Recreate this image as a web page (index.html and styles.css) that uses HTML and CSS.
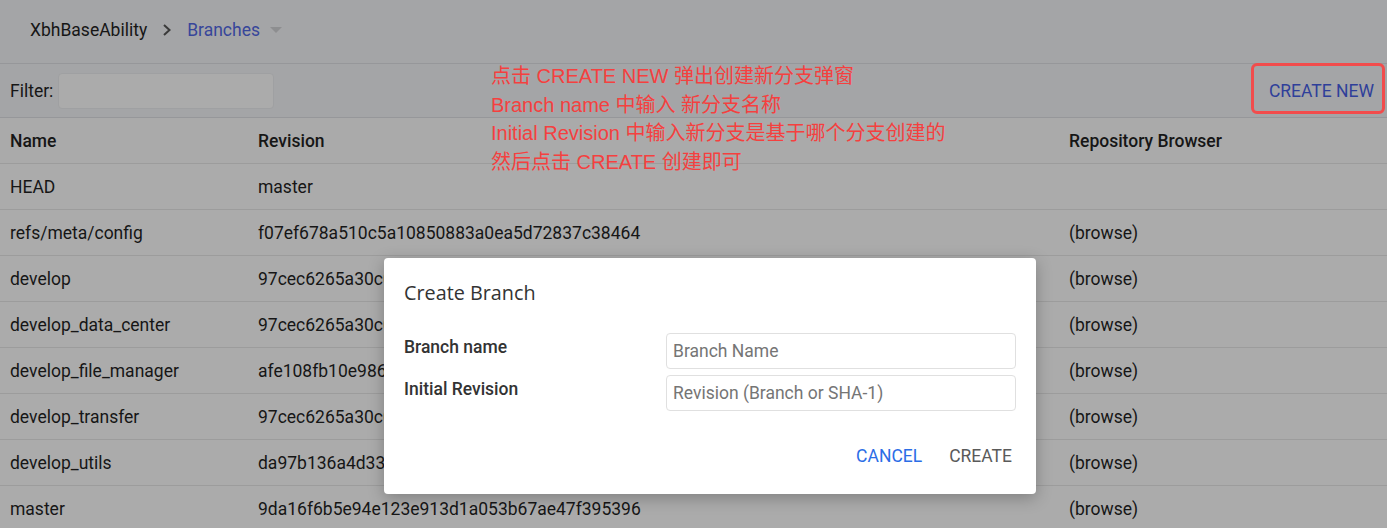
FILE: index.html
```html
<!DOCTYPE html>
<html>
<head>
<meta charset="utf-8">
<link rel="stylesheet" href="styles.css">
</head>
<body>
<div class="page">
  <header class="topbar">
    <span class="crumb-repo">XbhBaseAbility</span>
    <svg class="chev" width="10" height="14" viewBox="0 0 10 14"><path d="M2 2 L7.5 7 L2 12" fill="none" stroke="#3a3a3a" stroke-width="2"/></svg>
    <span class="crumb-cur">Branches</span>
    <svg class="caret" width="12" height="8" viewBox="0 0 12 8"><path d="M0 1 L12 1 L6 7 Z" fill="#8d8e90"/></svg>
  </header>
  <div class="filterbar">
    <label class="filter-label">Filter:</label>
    <div class="filter-input"></div>
    <div class="spacer"></div>
    <span class="create-new">CREATE NEW</span>
  </div>
  <div class="table">
    <div class="row head"><span>Name</span><span>Revision</span><span>Repository Browser</span></div>
    <div class="row"><span>HEAD</span><span>master</span><span></span></div>
    <div class="row"><span>refs/meta/config</span><span>f07ef678a510c5a10850883a0ea5d72837c38464</span><span>(browse)</span></div>
    <div class="row"><span>develop</span><span>97cec6265a30c0</span><span>(browse)</span></div>
    <div class="row"><span>develop_data_center</span><span>97cec6265a30c0</span><span>(browse)</span></div>
    <div class="row"><span>develop_file_manager</span><span>afe108fb10e986</span><span>(browse)</span></div>
    <div class="row"><span>develop_transfer</span><span>97cec6265a30c0</span><span>(browse)</span></div>
    <div class="row"><span>develop_utils</span><span>da97b136a4d33</span><span>(browse)</span></div>
    <div class="row"><span>master</span><span>9da16f6b5e94e123e913d1a053b67ae47f395396</span><span>(browse)</span></div>
  </div>

  <div class="redbox"></div>
  <div class="note">
    <p>点击 CREATE NEW 弹出创建新分支弹窗</p>
    <p>Branch name 中输入 新分支名称</p>
    <p>Initial Revision 中输入新分支是基于哪个分支创建的</p>
    <p>然后点击 CREATE 创建即可</p>
  </div>

  <div class="dialog">
    <h2 class="dlg-title">Create Branch</h2>
    <div class="dlg-form">
      <span class="dlg-label">Branch name</span>
      <div class="dlg-input">Branch Name</div>
      <span class="dlg-label">Initial Revision</span>
      <div class="dlg-input">Revision (Branch or SHA-1)</div>
    </div>
    <div class="dlg-actions">
      <span class="btn cancel">CANCEL</span>
      <span class="btn create">CREATE</span>
    </div>
  </div>
</div>
</body>
</html>
```

FILE: styles.css
```css
* { box-sizing: border-box; }
html, body { margin: 0; padding: 0; }
body {
  width: 1387px;
  height: 528px;
  overflow: hidden;
  background: #ababab;
  font-family: Roboto, "Liberation Sans", sans-serif;
  color: #141414;
}
.page { position: relative; width: 1387px; height: 528px; }

.topbar {
  height: 64px;
  background: #a4a5a7;
  border-bottom: 1px solid #96979a;
  display: flex;
  align-items: center;
  padding-left: 30px;
  padding-bottom: 4px;
  font-size: 17.5px;
}
.crumb-repo { color: #161616; }
.chev { margin-left: 15px; margin-right: 15px; }
.crumb-cur { color: #37469a; }
.caret { margin-left: 10px; margin-top: 1px; }

.filterbar {
  height: 54px;
  background: #a4a5a7;
  border-bottom: 1px solid #96979a;
  display: flex;
  align-items: center;
  padding-left: 10px;
  font-size: 17.5px;
}
.filter-label { color: #161616; margin-right: 5px; }
.filter-input {
  width: 216px;
  height: 36px;
  background: #ababab;
  border: 1px solid #9fa0a2;
  border-radius: 4px;
}
.spacer { flex: 1; }
.create-new {
  color: #2f3f9a;
  font-size: 17.5px;
  margin-right: 13px;
}

.table { font-size: 17.5px; }
.row {
  display: grid;
  grid-template-columns: 248px 811px 1fr;
  height: 46px;
  align-items: center;
  padding-left: 10px;
  border-bottom: 1px solid #9c9c9c;
  color: #161616;
}
.row.head { font-weight: 500; background: #aaaaaa; }

.redbox {
  position: absolute;
  left: 1251px;
  top: 63px;
  width: 134px;
  height: 51px;
  border: 3px solid #f24c4c;
  border-radius: 6px;
}

.note {
  position: absolute;
  left: 491px;
  top: 62px;
  color: #f5403f;
  font-family: "Liberation Sans", "Noto Sans CJK SC", sans-serif;
  font-size: 20px;
  line-height: 28.5px;
}
.note p { margin: 0; white-space: nowrap; }

.dialog {
  position: absolute;
  left: 384px;
  top: 258px;
  width: 652px;
  height: 236px;
  background: #ffffff;
  border-radius: 4px;
  box-shadow: 0 4px 16px rgba(0,0,0,0.25);
  padding: 20px 20px 0 20px;
}
.dlg-title {
  margin: 0;
  font-family: "Open Sans", "Noto Sans", sans-serif;
  font-weight: 400;
  font-size: 19.8px;
  line-height: 30px;
  color: #333;
}
.dlg-form {
  display: grid;
  grid-template-columns: 262px 350px;
  row-gap: 6px;
  margin-top: 25px;
}
.dlg-label {
  font-weight: 500;
  font-size: 17.5px;
  color: #333;
  padding-top: 4px;
}
.dlg-input {
  height: 36px;
  border: 1px solid #e0e0e0;
  border-radius: 4px;
  padding-left: 6px;
  display: flex;
  align-items: center;
  font-size: 17.5px;
  color: #757575;
}
.dlg-actions {
  display: flex;
  justify-content: flex-end;
  gap: 27px;
  margin-top: 35px;
  padding-right: 4px;
  font-size: 17.5px;
}
.cancel { color: #2b6de6; }
.create { color: #5a5a5a; }
```
